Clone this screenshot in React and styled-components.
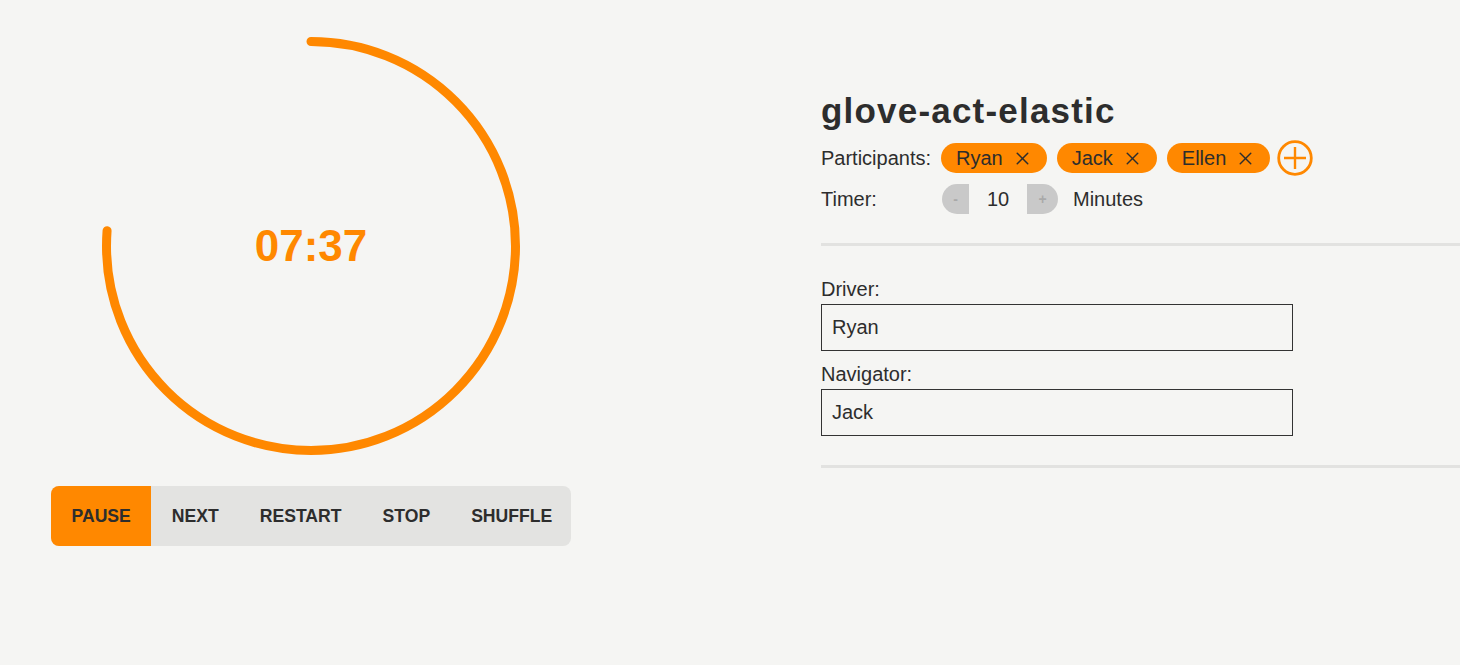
import styled, { createGlobalStyle } from "styled-components";
import { X } from "lucide-react";

const ORANGE = "#ff8800";
const INK = "#2d2d2d";

const GlobalStyle = createGlobalStyle`
  html, body {
    margin: 0;
    padding: 0;
    background: #f5f5f3;
    font-family: "Liberation Sans", Arial, sans-serif;
    color: ${INK};
  }
`;

const Page = styled.main`
  display: flex;
  align-items: flex-start;
  gap: 250px;
  padding: 36px 0 0 51px;
  min-height: 629px;
`;

const TimerColumn = styled.section`
  width: 520px;
  display: flex;
  flex-direction: column;
  align-items: center;
`;

const Dial = styled.div`
  position: relative;
  width: 420px;
  height: 420px;

  & > svg {
    display: block;
  }
`;

const TimeLeft = styled.div`
  position: absolute;
  inset: 0;
  display: flex;
  align-items: center;
  justify-content: center;
  font-size: 44px;
  font-weight: bold;
  color: ${ORANGE};
`;

const ControlBar = styled.div`
  display: flex;
  align-self: stretch;
  height: 60px;
  margin-top: 30px;
  background: #e3e3e1;
  border-radius: 8px;
  overflow: hidden;
`;

const ControlButton = styled.button`
  border: none;
  margin: 0;
  padding: 0 20.5px;
  background: ${(p) => (p.$active ? ORANGE : "transparent")};
  color: ${INK};
  font-family: inherit;
  font-size: 17.6px;
  font-weight: bold;
  text-transform: uppercase;
  cursor: pointer;
`;

const Session = styled.section`
  flex: 1;
  padding-top: 55px;
`;

const Title = styled.h1`
  margin: 0 0 12px;
  font-size: 35px;
  line-height: 40px;
  font-weight: bold;
  letter-spacing: 1.2px;
`;

const Row = styled.div`
  display: flex;
  align-items: center;
  height: 30px;
  margin-bottom: 11px;
  font-size: 20px;
`;

const RowLabel = styled.span`
  width: 120px;
  flex: none;
`;

const Chips = styled.div`
  display: flex;
  align-items: center;
  gap: 10px;
`;

const Chip = styled.span`
  display: inline-flex;
  align-items: center;
  gap: 9px;
  height: 30px;
  padding: 0 14px 0 15px;
  border-radius: 15px;
  background: ${ORANGE};
  color: ${INK};
`;

const AddButton = styled.button`
  display: flex;
  border: none;
  background: none;
  padding: 0;
  margin-left: -3px;
  cursor: pointer;
`;

const Stepper = styled.div`
  display: flex;
  align-items: center;
  margin-left: 1px;
`;

const StepButton = styled.button`
  width: ${(p) => (p.$side === "left" ? "27px" : "31px")};
  height: 30px;
  border: none;
  padding: 0;
  background: #c9c9c9;
  color: #a9a9a9;
  font-family: inherit;
  font-size: 14px;
  font-weight: bold;
  border-radius: ${(p) => (p.$side === "left" ? "15px 0 0 15px" : "0 15px 15px 0")};
`;

const StepValue = styled.span`
  width: 58px;
  text-align: center;
`;

const Unit = styled.span`
  margin-left: 15px;
`;

const Divider = styled.hr`
  border: none;
  height: 3px;
  background: #e2e2e0;
  margin: 29px 0 0;
`;

const Roles = styled.div`
  padding-top: 32px;
`;

const Field = styled.label`
  display: block;
  margin-bottom: 12px;
  font-size: 20px;
  line-height: 23px;
`;

const FieldInput = styled.input`
  display: block;
  box-sizing: border-box;
  width: 472px;
  height: 47px;
  margin-top: 3px;
  padding: 0 10px;
  border: 1px solid #333;
  background: transparent;
  font-family: inherit;
  font-size: 20px;
  color: ${INK};
`;

const R = 204.5;
const CIRC = 2 * Math.PI * R;

const ProgressRing = ({ fraction }) => (
  <svg width="420" height="420" viewBox="0 0 420 420">
    <circle
      cx="210"
      cy="210"
      r={R}
      fill="none"
      stroke={ORANGE}
      strokeWidth="9"
      strokeLinecap="round"
      strokeDasharray={`${CIRC * fraction} ${CIRC}`}
      transform="rotate(-90 210 210)"
    />
  </svg>
);

const PlusIcon = () => (
  <svg width="36" height="36" viewBox="0 0 36 36">
    <circle cx="18" cy="18" r="16.3" fill="none" stroke={ORANGE} strokeWidth="2.8" />
    <path d="M18 7v22M7 18h22" stroke={ORANGE} strokeWidth="2.4" />
  </svg>
);

const App = () => {
  const participants = ["Ryan", "Jack", "Ellen"];
  const total = 600;
  const remaining = 457;
  const fmt = (s) =>
    `${String(Math.floor(s / 60)).padStart(2, "0")}:${String(s % 60).padStart(2, "0")}`;

  return (
    <>
      <GlobalStyle />
      <Page>
        <TimerColumn>
          <Dial>
            <ProgressRing fraction={remaining / total} />
            <TimeLeft>{fmt(remaining)}</TimeLeft>
          </Dial>
          <ControlBar>
            <ControlButton $active>Pause</ControlButton>
            <ControlButton>Next</ControlButton>
            <ControlButton>Restart</ControlButton>
            <ControlButton>Stop</ControlButton>
            <ControlButton>Shuffle</ControlButton>
          </ControlBar>
        </TimerColumn>

        <Session>
          <Title>glove-act-elastic</Title>
          <Row>
            <RowLabel>Participants:</RowLabel>
            <Chips>
              {participants.map((name) => (
                <Chip key={name}>
                  {name}
                  <X size={21} strokeWidth={1.7} color={INK} />
                </Chip>
              ))}
              <AddButton aria-label="Add participant">
                <PlusIcon />
              </AddButton>
            </Chips>
          </Row>
          <Row>
            <RowLabel>Timer:</RowLabel>
            <Stepper>
              <StepButton $side="left">-</StepButton>
              <StepValue>10</StepValue>
              <StepButton $side="right">+</StepButton>
            </Stepper>
            <Unit>Minutes</Unit>
          </Row>
          <Divider />
          <Roles>
            <Field>
              Driver:
              <FieldInput defaultValue="Ryan" />
            </Field>
            <Field>
              Navigator:
              <FieldInput defaultValue="Jack" />
            </Field>
          </Roles>
          <Divider />
        </Session>
      </Page>
    </>
  );
};

export default App;
